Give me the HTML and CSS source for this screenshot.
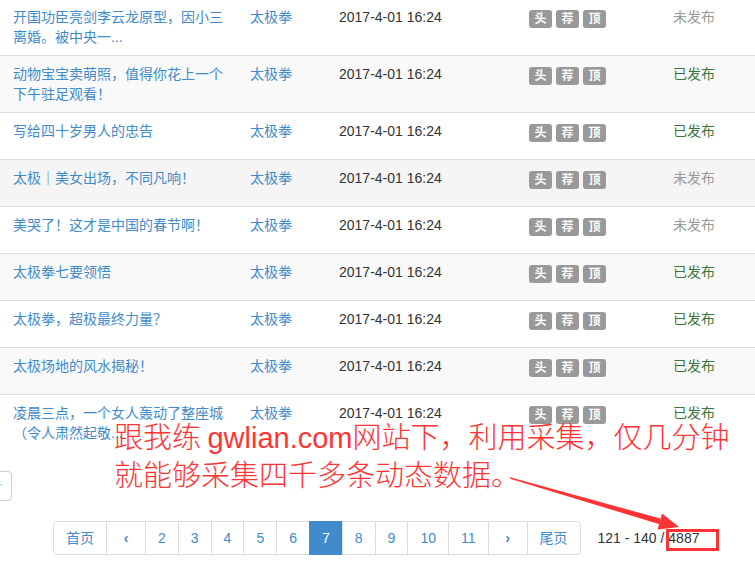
FILE: index.html
```html
<!DOCTYPE html>
<html lang="zh-CN">
<head>
<meta charset="utf-8">
<title>文章列表</title>
<link rel="stylesheet" href="styles.css">
</head>
<body>
<div class="page">
  <table class="list">
    <colgroup>
      <col class="c-title"><col class="c-author"><col class="c-date"><col class="c-flags"><col class="c-status">
    </colgroup>
    <tbody>
      <tr>
        <td><a class="link" href="#">开国功臣亮剑李云龙原型，因小三离婚。被中央一...</a></td>
        <td><a class="link" href="#">太极拳</a></td>
        <td>2017-4-01 16:24</td>
        <td><div class="flags"><span class="flag">头</span><span class="flag">荐</span><span class="flag">顶</span></div></td>
        <td class="status off">未发布</td>
      </tr>
      <tr class="odd">
        <td><a class="link" href="#">动物宝宝卖萌照，值得你花上一个下午驻足观看！</a></td>
        <td><a class="link" href="#">太极拳</a></td>
        <td>2017-4-01 16:24</td>
        <td><div class="flags"><span class="flag">头</span><span class="flag">荐</span><span class="flag">顶</span></div></td>
        <td class="status on">已发布</td>
      </tr>
      <tr>
        <td><a class="link" href="#">写给四十岁男人的忠告</a></td>
        <td><a class="link" href="#">太极拳</a></td>
        <td>2017-4-01 16:24</td>
        <td><div class="flags"><span class="flag">头</span><span class="flag">荐</span><span class="flag">顶</span></div></td>
        <td class="status on">已发布</td>
      </tr>
      <tr class="hover">
        <td><a class="link" href="#">太极｜美女出场，不同凡响！</a></td>
        <td><a class="link" href="#">太极拳</a></td>
        <td>2017-4-01 16:24</td>
        <td><div class="flags"><span class="flag">头</span><span class="flag">荐</span><span class="flag">顶</span></div></td>
        <td class="status off">未发布</td>
      </tr>
      <tr>
        <td><a class="link" href="#">美哭了！这才是中国的春节啊！</a></td>
        <td><a class="link" href="#">太极拳</a></td>
        <td>2017-4-01 16:24</td>
        <td><div class="flags"><span class="flag">头</span><span class="flag">荐</span><span class="flag">顶</span></div></td>
        <td class="status off">未发布</td>
      </tr>
      <tr class="odd">
        <td><a class="link" href="#">太极拳七要领悟</a></td>
        <td><a class="link" href="#">太极拳</a></td>
        <td>2017-4-01 16:24</td>
        <td><div class="flags"><span class="flag">头</span><span class="flag">荐</span><span class="flag">顶</span></div></td>
        <td class="status on">已发布</td>
      </tr>
      <tr>
        <td><a class="link" href="#">太极拳，超极最终力量？</a></td>
        <td><a class="link" href="#">太极拳</a></td>
        <td>2017-4-01 16:24</td>
        <td><div class="flags"><span class="flag">头</span><span class="flag">荐</span><span class="flag">顶</span></div></td>
        <td class="status on">已发布</td>
      </tr>
      <tr class="odd">
        <td><a class="link" href="#">太极场地的风水揭秘！</a></td>
        <td><a class="link" href="#">太极拳</a></td>
        <td>2017-4-01 16:24</td>
        <td><div class="flags"><span class="flag">头</span><span class="flag">荐</span><span class="flag">顶</span></div></td>
        <td class="status on">已发布</td>
      </tr>
      <tr>
        <td><a class="link" href="#">凌晨三点，一个女人轰动了整座城（令人肃然起敬...</a></td>
        <td><a class="link" href="#">太极拳</a></td>
        <td>2017-4-01 16:24</td>
        <td><div class="flags"><span class="flag">头</span><span class="flag">荐</span><span class="flag">顶</span></div></td>
        <td class="status on">已发布</td>
      </tr>
    </tbody>
  </table>

  <div class="toolbar">
    <button class="btn-edge" type="button">跳转</button>
  </div>

  <div class="pager-row">
    <ul class="pagination">
      <li><a href="#">首页</a></li>
      <li><a class="arrow" href="#">‹</a></li>
      <li><a href="#">2</a></li>
      <li><a href="#">3</a></li>
      <li><a href="#">4</a></li>
      <li><a href="#">5</a></li>
      <li><a href="#">6</a></li>
      <li class="active"><a href="#">7</a></li>
      <li><a href="#">8</a></li>
      <li><a href="#">9</a></li>
      <li><a href="#">10</a></li>
      <li><a href="#">11</a></li>
      <li><a class="arrow" href="#">›</a></li>
      <li><a href="#">尾页</a></li>
    </ul>
    <span class="count">121 - 140 / 4887</span>
  </div>

  <div class="note">跟我练 <span class="latin">gwlian.com</span>网站下，利用采集，仅几分钟<br>就能够采集四千多条动态数据。</div>
  <svg class="arrow-mark" width="755" height="561" viewBox="0 0 755 561">
    <polygon points="510,477.3 510,478.7 659.6,524.3 660.4,518.5" fill="#f33"/>
    <polygon points="679,527 657.6,529.4 662.0,513.4" fill="#f33"/>
  </svg>
  <div class="mark-box"></div>
</div>
</body>
</html>
```

FILE: styles.css
```css
* { box-sizing: border-box; }

html, body {
  margin: 0;
  padding: 0;
  background: #fff;
}

body {
  font-family: "Liberation Sans", Arial, "Noto Sans CJK SC", sans-serif;
  font-size: 14px;
  line-height: 20px;
  color: #333;
  overflow: hidden;
}

.page {
  position: relative;
  width: 755px;
  height: 561px;
  overflow: hidden;
}

.list {
  width: 755px;
  border-collapse: collapse;
  table-layout: fixed;
  margin-top: -2px;
}

.c-title { width: 242px; }
.c-author { width: 89px; }
.c-date { width: 190px; }
.c-flags { width: 144px; }
.c-status { width: 90px; }

.list td {
  border-top: 1px solid #ddd;
  padding: 8px;
  vertical-align: top;
}

.list td:first-child { padding-left: 13px; }

.list tr.odd td { background: #f9f9f9; }
.list tr.hover td { background: #f5f5f5; }

.link {
  color: #428bca;
  text-decoration: none;
}

.flags {
  display: flex;
  gap: 4px;
  padding-top: 3px;
}

.flag {
  display: block;
  width: 23px;
  height: 18px;
  line-height: 18px;
  text-align: center;
  font-size: 12px;
  font-weight: bold;
  color: #fff;
  background: #999;
  border-radius: 3px;
}

.status::after {
  content: "";
  display: block;
  height: 10px;
}

.status.on { color: #3c763d; }
.status.off { color: #999; }

.toolbar {
  margin-top: 20px;
  height: 30px;
}

.btn-edge {
  display: block;
  margin-left: -34px;
  width: 46px;
  height: 30px;
  padding: 0 0 0 6px;
  border: 1px solid #ccc;
  border-radius: 4px;
  background: #fff;
  color: #428bca;
  font: inherit;
  text-align: left;
}

.pager-row {
  margin-top: 20px;
  padding-left: 53px;
  display: flex;
  align-items: center;
}

.pagination {
  display: flex;
  margin: 0;
  padding: 0;
  list-style: none;
}

.pagination li a {
  display: block;
  padding: 6px 12px;
  line-height: 20px;
  color: #428bca;
  text-decoration: none;
  background: #fff;
  border: 1px solid #ddd;
  margin-left: -1px;
}

.pagination li:first-child a {
  margin-left: 0;
  border-radius: 4px 0 0 4px;
}

.pagination li:last-child a {
  border-radius: 0 4px 4px 0;
}

.pagination li a.arrow {
  width: 40px;
  text-align: center;
  padding-left: 0;
  padding-right: 0;
  font-weight: bold;
}

.pagination li.active a {
  background: #428bca;
  border-color: #428bca;
  color: #fff;
}

.count {
  margin-left: 17px;
  color: #333;
}

.note {
  position: absolute;
  left: 114px;
  top: 418px;
  white-space: nowrap;
  font-family: "Noto Sans CJK SC", sans-serif;
  font-weight: 300;
  font-size: 29px;
  line-height: 35px;
  color: #f33;
}

.note .latin {
  font-family: "Liberation Sans", Arial, sans-serif;
  font-weight: normal;
}

.arrow-mark {
  position: absolute;
  left: 0;
  top: 0;
  pointer-events: none;
}

.mark-box {
  position: absolute;
  left: 666px;
  top: 529px;
  width: 53px;
  height: 22px;
  border: 3px solid #f33;
}
```
